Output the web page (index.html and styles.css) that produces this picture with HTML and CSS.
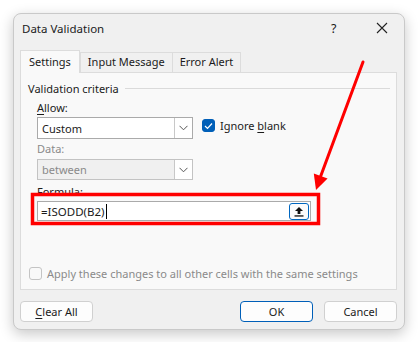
FILE: index.html
```html
<!DOCTYPE html>
<html lang="en">
<head>
  <meta charset="UTF-8" />
  <title>Data Validation</title>
  <link rel="stylesheet" href="styles.css">
</head>
<body>

  <div class="dialog">
    <div class="titlebar">
      <span class="title">Data Validation</span>
      <span class="help">?</span>
      <svg class="close" width="12" height="12" viewBox="0 0 12 12">
        <path d="M1 1 L11 11 M11 1 L1 11" stroke="#222" stroke-width="1.1" fill="none"/>
      </svg>
    </div>

    <div class="tabs">
      <div class="tab active">Settings</div>
      <div class="tab">Input Message</div>
      <div class="tab">Error Alert</div>
    </div>

    <div class="panel">
      <div class="legend">
        <span>Validation criteria</span>
        <div class="rule"></div>
      </div>

      <div class="label"><u>A</u>llow:</div>
      <div class="row">
        <div class="select">
          <span class="value">Custom</span>
          <span class="drop">
            <svg width="9" height="6" viewBox="0 0 9 6"><path d="M0.5 0.8 L4.5 4.8 L8.5 0.8" stroke="#555" fill="none"/></svg>
          </span>
        </div>
        <label class="check">
          <span class="box on">
            <svg width="9" height="8" viewBox="0 0 9 8"><path d="M1 4 L3.5 6.5 L8 1.5" stroke="#fff" stroke-width="1.2" fill="none"/></svg>
          </span>
          <span>Ignore <u>b</u>lank</span>
        </label>
      </div>

      <div class="label disabled">Data:</div>
      <div class="select off">
        <span class="value">between</span>
        <span class="drop">
          <svg width="9" height="6" viewBox="0 0 9 6"><path d="M0.5 0.8 L4.5 4.8 L8.5 0.8" stroke="#555" fill="none"/></svg>
        </span>
      </div>

      <div class="label">Formula:</div>
      <div class="formula">
        <span class="text">=ISODD(B2)</span><span class="caret"></span>
        <span class="refbtn">
          <svg width="10" height="11" viewBox="0 0 10 11">
            <path d="M5 1 L1 5 L3.6 5 L3.6 8 L6.4 8 L6.4 5 L9 5 Z" fill="#111"/>
            <rect x="0.5" y="9.3" width="9" height="1.3" fill="#111"/>
          </svg>
        </span>
      </div>

      <label class="check apply">
        <span class="box"></span>
        <span>Apply these changes to all other cells with the same settings</span>
      </label>
    </div>

    <div class="buttons">
      <button class="btn"><u>C</u>lear All</button>
      <div class="spacer"></div>
      <button class="btn primary">OK</button>
      <button class="btn">Cancel</button>
    </div>
  </div>

  <!-- red annotation drawn over the screenshot -->
  <svg class="annotation" width="418" height="342" viewBox="0 0 418 342">
    <rect x="32.5" y="194.5" width="286" height="29" fill="none" stroke="#ff0000" stroke-width="3.5"/>
    <line x1="363" y1="62" x2="320" y2="178" stroke="#ff0000" stroke-width="3" stroke-linecap="round"/>
    <polygon points="316,190 313.8,173.6 327.6,178.6" fill="#ff0000"/>
  </svg>

</body>
</html>
```

FILE: styles.css
```css
body {
  margin: 0;
  padding: 13px 0 0 13px;
  background: #ffffff;
  font-family: 'Noto Sans', 'Open Sans', sans-serif;
  font-size: 11px;
  color: #1b1b1b;
  width: 418px;
  height: 342px;
  box-sizing: border-box;
  overflow: hidden;
}
u {
  text-decoration-thickness: 1px;
  text-underline-offset: 2px;
}
.dialog {
  width: 392px;
  height: 317px;
  box-sizing: border-box;
  background: #f0f0f0;
  border: 1px solid #c9c9c9;
  border-radius: 8px;
  box-shadow: 0 4px 14px rgba(0,0,0,0.22);
  display: flex;
  flex-direction: column;
}
.titlebar {
  height: 28px;
  display: flex;
  align-items: center;
  padding: 0 0 0 8px;
}
.title {
  font-size: 11.5px;
  flex: 1;
}
.help {
  font-size: 12.5px;
  width: 12px;
  margin-right: 33px;
}
.close {
  margin-right: 16px;
}
.tabs {
  display: flex;
  align-items: flex-end;
  height: 22px;
  margin: 8px 0 0 6px;
  position: relative;
  z-index: 1;
}
.tab {
  height: 20px;
  box-sizing: border-box;
  border: 1px solid #dcdcdc;
  border-bottom: none;
  background: #f0f0f0;
  padding: 0 7px;
  line-height: 18px;
}
.tab + .tab {
  margin-left: -1px;
}
.tab.active {
  height: 23px;
  margin-bottom: -1px;
  background: #f9f9f9;
  line-height: 22px;
  padding: 0 8px;
  margin-right: 1px;
}
.panel {
  margin: 0 0 0 6px;
  width: 377px;
  height: 218px;
  box-sizing: border-box;
  border: 1px solid #dcdcdc;
  background: #f9f9f9;
  padding: 7px 0 0 16px;
}
.legend {
  display: flex;
  align-items: center;
  height: 16px;
  margin-left: -9px;
}
.legend .rule {
  flex: 1;
  height: 1px;
  background: #dadada;
  margin: 0 6px 0 6px;
}
.label {
  height: 16px;
  line-height: 16px;
  margin-top: 4px;
}
.label.disabled {
  color: #8a8a8a;
  margin-top: 2px;
}
.row {
  display: flex;
  align-items: flex-start;
  margin-top: 1px;
}
.select {
  width: 156px;
  height: 22px;
  box-sizing: border-box;
  border: 1px solid #aaaaaa;
  background: #ffffff;
  display: flex;
  align-items: center;
}
.select .value {
  flex: 1;
  padding-left: 4px;
}
.select .drop {
  width: 17px;
  height: 100%;
  border-left: 1px solid #c8c8c8;
  display: flex;
  align-items: center;
  justify-content: center;
  background: #ffffff;
}
.select.off {
  margin-top: 2px;
  height: 21px;
  background: #f0f0f0;
  border-color: #c3c3c3;
  color: #8a8a8a;
}
.check {
  display: flex;
  align-items: center;
  margin: 1px 0 0 9px;
}
.box {
  width: 13px;
  height: 13px;
  box-sizing: border-box;
  border: 1px solid #8d8d8d;
  border-radius: 3px;
  margin-right: 5px;
  display: flex;
  align-items: center;
  justify-content: center;
  background: #f9f9f9;
}
.box.on {
  background: #005fb8;
  border-color: #005fb8;
}
.formula {
  margin-top: 1px;
  width: 274px;
  height: 20px;
  box-sizing: border-box;
  border: 1px solid #aaaaaa;
  background: #ffffff;
  display: flex;
  align-items: center;
  padding-left: 3px;
  font-size: 11.5px;
}
.formula .caret {
  width: 1px;
  height: 15px;
  background: #000;
  margin-left: 1px;
}
.refbtn {
  margin-left: auto;
  margin-right: 1px;
  width: 20px;
  height: 17px;
  box-sizing: border-box;
  border: 1px solid #0067c0;
  border-radius: 3px;
  background: #fcfcfc;
  display: flex;
  align-items: center;
  justify-content: center;
}
.check.apply {
  color: #8a8a8a;
  margin: 45px 0 0 -8px;
}
.check.apply .box {
  border-color: #c4c4c4;
}
.buttons {
  display: flex;
  margin: 11px 7px 0 6px;
  gap: 11px;
}
.spacer {
  flex: 1;
}
.btn {
  width: 73px;
  height: 21px;
  box-sizing: border-box;
  border: 1px solid #d0d0d0;
  border-radius: 4px;
  background: #fdfdfd;
  font-family: 'Noto Sans', 'Open Sans', sans-serif;
  font-size: 11px;
  color: #1b1b1b;
  padding: 0;
}
.btn.primary {
  border-color: #005fb8;
}
.annotation {
  position: absolute;
  top: 0;
  left: 0;
}
```
